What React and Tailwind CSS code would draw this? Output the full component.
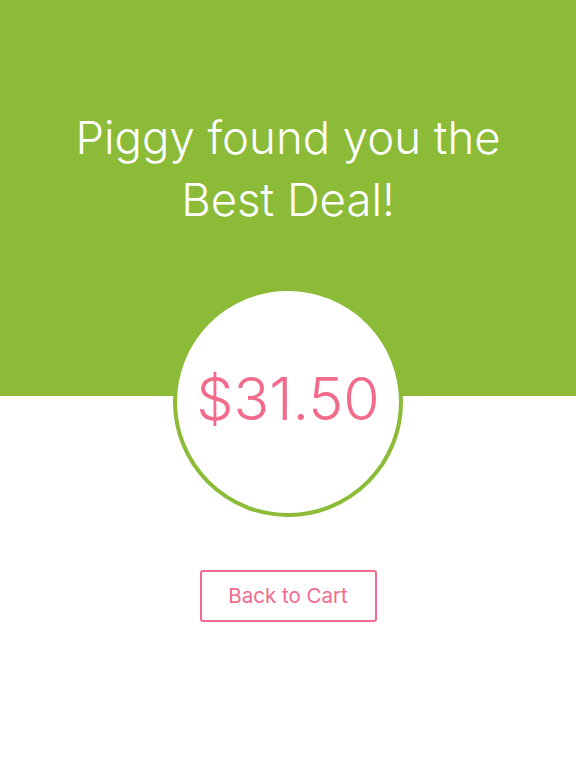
export default function App() {
  return (
    <div className="min-h-[768px] w-full bg-white flex flex-col items-center" style={{ fontFamily: 'Inter, "Liberation Sans", sans-serif' }}>
      {/* Bandeau vert avec le titre */}
      <div className="w-full h-[396px] bg-[#8bbb37] pt-[107px]">
        <h1 className="text-white text-[45.5px] leading-[62px] font-light text-center">
          Piggy found you the
          <br />
          Best Deal!
        </h1>
      </div>

      {/* Cercle du prix, à cheval sur le bandeau */}
      <div className="-mt-[109px] w-[230px] h-[230px] rounded-full bg-white border-4 border-[#8bbb37] flex items-center justify-center">
        <span className="text-[#f26b8b] text-[59px] font-light pb-[6px]">$31.50</span>
      </div>

      <button className="mt-[53px] w-[177px] h-[52px] border-2 border-[#f26b8b] rounded-[3px] text-[#f26b8b] text-[20.5px]">
        Back to Cart
      </button>
    </div>
  );
}
